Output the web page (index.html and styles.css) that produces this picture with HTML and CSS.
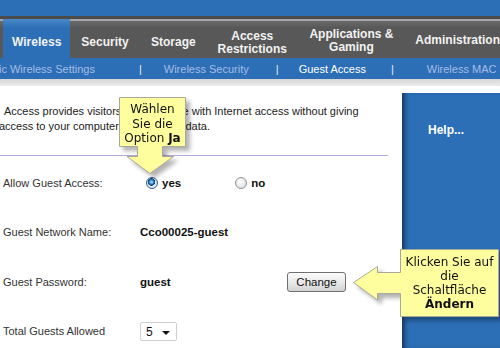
FILE: index.html
```html
<!DOCTYPE html>
<html lang="de">
<head>
    <meta charset="UTF-8">
    <title>Guest Access</title>
    <link rel="stylesheet" href="styles.css">
</head>
<body>
    <div class="topbar"></div>
    <div class="tabs">
        <div class="tab active w-wireless">Wireless</div>
        <div class="tab w-security">Security</div>
        <div class="tab w-storage">Storage</div>
        <div class="tab w-access">Access<br>Restrictions</div>
        <div class="tab w-apps">Applications &amp;<br>Gaming</div>
        <div class="tab w-admin">Administration</div>
    </div>
    <div class="subnav">
        <span class="sub first">Basic Wireless Settings</span>
        <span class="sep s1">|</span>
        <span class="sub">Wireless Security</span>
        <span class="sep s2">|</span>
        <span class="sub current">Guest Access</span>
        <span class="sep s3">|</span>
        <span class="sub last">Wireless MAC Filter</span>
    </div>
    <div class="band"></div>
    <div class="main">
        <div class="content">
            <p class="intro">Access provides visitors to your home with Internet access without giving access to your computers or personal data.</p>
            <div class="rule"></div>
            <div class="row">
                <div class="label">Allow Guest Access:</div>
                <div class="value">
                    <label class="choice"><input type="radio" name="guest" checked> yes</label>
                    <label class="choice no"><input type="radio" name="guest"> no</label>
                </div>
            </div>
            <div class="row">
                <div class="label">Guest Network Name:</div>
                <div class="value strong">Cco00025-guest</div>
            </div>
            <div class="row">
                <div class="label">Guest Password:</div>
                <div class="value strong">guest</div>
                <button class="btn">Change</button>
            </div>
            <div class="row">
                <div class="label">Total Guests Allowed</div>
                <div class="value">
                    <div class="select">5<span class="caret"></span></div>
                </div>
            </div>
        </div>
        <div class="help">Help...</div>
    </div>

    <div class="callout callout-down">
        <svg width="80" height="90" viewBox="0 0 80 90">
            <path d="M0.5 0.5 H66.5 V49.5 H43.5 V59.5 H54.5 L31 76.5 L8 59.5 H18.5 V49.5 H0.5 Z" fill="#fefe9e" stroke="#a9a99a"/>
        </svg>
        <div class="callout-text">Wählen<br>Sie die<br>Option <b>Ja</b></div>
    </div>

    <div class="callout callout-left">
        <svg width="160" height="80" viewBox="0 0 160 80">
            <path d="M47.5 0.5 H145.5 V67.5 H47.5 V44.5 H24.5 V51 L0.5 33.5 L24.5 17.5 V23.5 H47.5 Z" fill="#fefe9e" stroke="#a9a99a"/>
        </svg>
        <div class="callout-text">Klicken Sie auf<br>die<br>Schaltfläche<br><b>Ändern</b></div>
    </div>
</body>
</html>
```

FILE: styles.css
```css
body {
    margin: 0;
    width: 500px;
    height: 348px;
    overflow: hidden;
    font-family: 'Liberation Sans', Arial, sans-serif;
    background-color: #fff;
    position: relative;
}

.topbar {
    height: 16px;
    background-color: #2c6fb6;
}

.tabs {
    display: flex;
    height: 42px;
    padding-left: 3px;
    background: linear-gradient(#4b4b4b 0 3px, #a6a6ae 3px 5px, #6a6a6a 5px, #585858 12px);
    color: #f2f2f2;
    font-size: 12px;
    font-weight: bold;
    line-height: 13px;
    white-space: nowrap;
}

.tab {
    display: flex;
    align-items: center;
    justify-content: center;
    text-align: center;
    padding-top: 11px;
}

.tab.active {
    margin-top: 3px;
    padding-top: 8px;
    background: linear-gradient(#4a88c8, #2c6fb6 9px);
}

.w-wireless { width: 70px; }
.w-security { width: 72px; }
.w-storage { width: 70px; }
.w-access { width: 94px; }
.w-apps { width: 112px; padding-top: 7px; }
.w-admin { padding-left: 10px; padding-top: 7px; }

.subnav {
    display: flex;
    align-items: center;
    height: 21px;
    background-color: #2c6fb6;
    font-size: 11px;
    color: #a7bbe6;
    white-space: nowrap;
}

.sub.first { margin-left: -20px; }
.sub.current { color: #fff; }
.sep { color: #e8eefa; }
.s1 { margin: 0 22px 0 44px; }
.s2 { margin: 0 20px 0 27px; }
.s3 { margin: 0 33px 0 25px; }

.band {
    height: 7px;
    background: linear-gradient(#d6d6d6, #ececec);
}

.main {
    display: flex;
    height: 262px;
}

.content {
    width: 402px;
    flex-shrink: 0;
}

.intro {
    width: 372px;
    margin: 18px 0 0 -1px;
    text-indent: 5px;
    font-size: 11px;
    line-height: 15px;
    color: #222;
}

.rule {
    width: 388px;
    height: 1px;
    margin: 21px 0 2px;
    background-color: #b2abd9;
}

.row {
    display: flex;
    align-items: center;
    height: 49.5px;
    font-size: 11px;
    color: #333;
}

.label {
    width: 137px;
    padding-left: 3px;
}

.value {
    width: 147px;
    display: flex;
    align-items: center;
}

.strong {
    font-weight: bold;
    font-size: 11.5px;
    color: #111;
}

.choice {
    display: flex;
    align-items: center;
    font-weight: bold;
    font-size: 11.5px;
    color: #111;
    margin-left: 6px;
}

.choice.no { margin-left: 54px; }

.choice input {
    appearance: none;
    width: 12px;
    height: 12px;
    margin: 0 4px 0 0;
    border: 1px solid #8a8f96;
    border-radius: 50%;
    background: radial-gradient(circle at 40% 35%, #fff, #d7d9dc);
    box-sizing: border-box;
}

.choice input:checked {
    border-color: #2a5a8a;
    background: radial-gradient(circle at 45% 40%, #7fc4f0 0 1px, #1f6fb7 2.5px, #0d3f74 3.5px, #dfe4ea 4px, #fff);
}

.btn {
    width: 59px;
    height: 20px;
    padding: 0;
    border: 1px solid #707070;
    border-radius: 3px;
    background: linear-gradient(#fcfcfc, #e6e6e6 60%, #d2d2d2);
    font-family: 'Liberation Sans', Arial, sans-serif;
    font-size: 11.5px;
    color: #111;
}

.select {
    position: relative;
    width: 37px;
    height: 19px;
    box-sizing: border-box;
    border: 1px solid #cfcfcf;
    border-radius: 2px;
    padding: 2px 0 0 5px;
    font-size: 12px;
    color: #111;
}

.caret {
    position: absolute;
    right: 6px;
    top: 8px;
    border-left: 4px solid transparent;
    border-right: 4px solid transparent;
    border-top: 4px solid #111;
}

.help {
    flex: 1;
    margin-top: 7px;
    padding: 30px 0 0 26px;
    background-color: #2c6fb6;
    box-shadow: inset 5px 0 4px -2px #183a63;
    color: #fff;
    font-size: 12px;
    font-weight: bold;
}

.callout {
    position: absolute;
    filter: drop-shadow(4px 4px 2px rgba(0, 0, 0, 0.3));
}

.callout svg {
    display: block;
}

.callout-text {
    position: absolute;
    font-family: 'DejaVu Sans', Verdana, sans-serif;
    font-size: 12px;
    line-height: 14.5px;
    color: #111;
    text-align: center;
}

.callout-down {
    left: 119px;
    top: 97px;
}

.callout-down .callout-text {
    left: 0;
    top: 5px;
    width: 67px;
}

.callout-left {
    left: 353px;
    top: 249px;
}

.callout-left .callout-text {
    left: 47px;
    top: 6px;
    width: 99px;
    line-height: 14px;
}
```
